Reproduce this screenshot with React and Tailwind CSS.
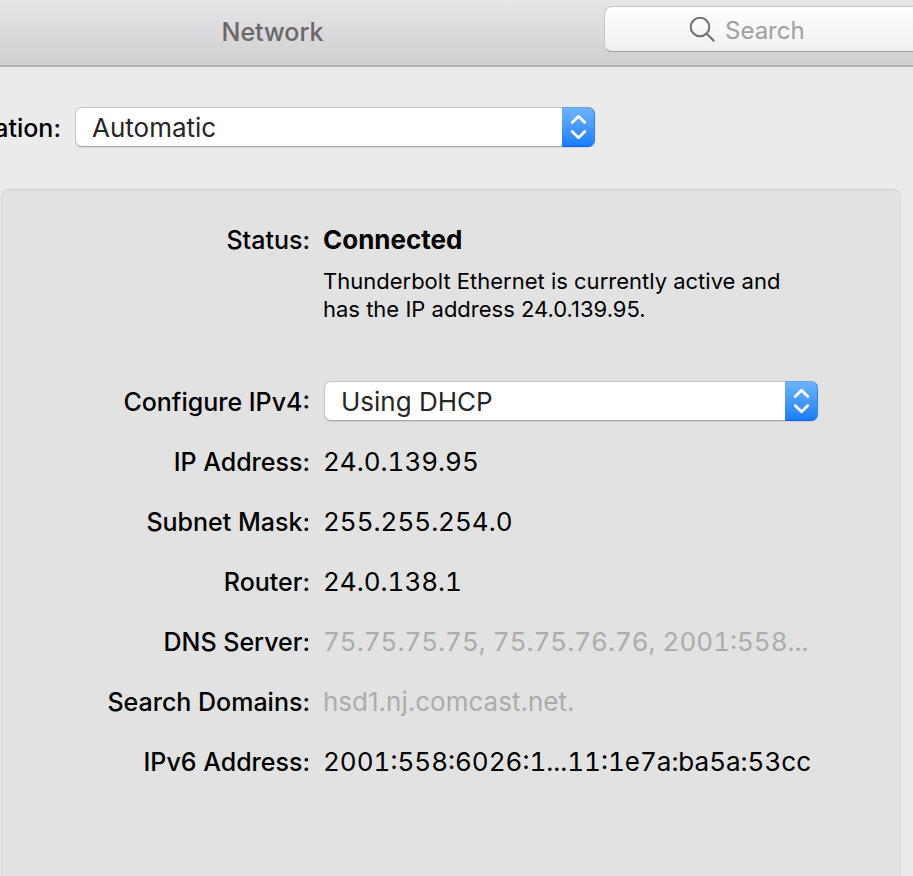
const StepperArrows = () => (
    <span className="pointer-events-none absolute inset-y-0 right-0 w-[33px] rounded-r-[7px] border-y border-r border-t-[#5ea5ee] border-r-[#2f83f5] border-b-[#0f62f8] bg-gradient-to-b from-[#6cb3fa] to-[#157dfd]">
        <svg width="32" height="38" viewBox="0 0 32 38" fill="none" stroke="white" strokeWidth="2.8" strokeLinecap="round" strokeLinejoin="round" aria-hidden="true">
            <path d="M10.2 14.6 16.5 8.3 22.8 14.6" />
            <path d="M10.2 23.4 16.5 29.7 22.8 23.4" />
        </svg>
    </span>
);

const PopUp = ({ id, options }) => (
    <div className="relative min-w-0 flex-1">
        <select
            id={id}
            className="block h-10 w-full appearance-none rounded-[7px] border border-[#c3c3c3] border-b-[#a8a8a8] bg-white pt-[2px] pr-10 pl-4 text-[26px] leading-8 text-[#262626] shadow-[0_1px_1px_rgba(0,0,0,0.08)]"
        >
            {options.map((option) => (
                <option key={option}>{option}</option>
            ))}
        </select>
        <StepperArrows />
    </div>
);

const details = [
    { label: "IP Address:", value: "24.0.139.95", style: "tabular-nums" },
    { label: "Subnet Mask:", value: "255.255.254.0", style: "tabular-nums" },
    { label: "Router:", value: "24.0.138.1", style: "tabular-nums" },
    { label: "DNS Server:", value: "75.75.75.75, 75.75.76.76, 2001:558...", style: "text-[#acacac] tabular-nums" },
    { label: "Search Domains:", value: "hsd1.nj.comcast.net.", style: "text-[#acacac]" },
    { label: "IPv6 Address:", value: "2001:558:6026:1...11:1e7a:ba5a:53cc", style: "tabular-nums" },
];

const App = () => {
    return (
        <div className="flex min-h-screen flex-col overflow-hidden bg-[#ebebeb] font-[Inter,'Liberation_Sans',sans-serif] text-[26px] leading-8 text-black">
            <header className="flex border-b-2 border-[#b2b0b2] bg-gradient-to-b from-[#e7e5e7] to-[#d0ced0] pt-[6px] pb-[13px]">
                <h1 className="w-[545px] pt-[10px] text-center text-[25px] leading-8 font-medium text-[#686868]">Network</h1>
                <label className="ml-[59px] flex h-[46px] min-w-0 flex-1 items-center gap-2 rounded-l-[8px] border border-r-0 border-[#c6c4c6] border-b-[#a09ea0] bg-gradient-to-b from-white to-[#f0f0f0] pl-[84px]">
                    <svg width="28" height="28" viewBox="0 0 28 28" fill="none" stroke="#6f6f6f" strokeWidth="2" className="shrink-0" aria-hidden="true">
                        <circle cx="11" cy="12" r="9.3" />
                        <path d="M17.5 18.5 25.3 26.3" />
                    </svg>
                    <input
                        type="search"
                        placeholder="Search"
                        aria-label="Search"
                        className="w-full min-w-0 bg-transparent pt-1 text-[24px] outline-none placeholder:text-[#a0a0a0]"
                    />
                </label>
            </header>

            <div className="mt-10 flex items-center gap-[14px]">
                <label htmlFor="location" className="flex w-[61px] justify-end pt-[2px] text-[25px] leading-8 font-medium">
                    Location:
                </label>
                <div className="flex w-[520px]">
                    <PopUp id="location" options={["Automatic"]} />
                </div>
            </div>

            <main className="mt-[42px] mr-3 ml-px flex-1 rounded-t-[8px] border border-b-0 border-[#d9d9d9] border-t-[#cfcfcf] bg-[#e2e2e2] pt-[34px] pr-[82px]">
                <dl className="grid grid-cols-[308px_1fr] gap-x-[13px]">
                    <dt className="text-right text-[25px] leading-8 font-medium">Status:</dt>
                    <dd>
                        <strong className="block font-bold">Connected</strong>
                        <p className="mt-[11px] max-w-[480px] text-[22px] leading-7">
                            Thunderbolt Ethernet is currently active and has the IP address 24.0.139.95.
                        </p>
                    </dd>
                </dl>

                <div className="mt-[58px] flex items-center gap-[14px]">
                    <label htmlFor="ipv4" className="w-[308px] pt-[2px] text-right text-[25px] leading-8 font-medium">
                        Configure IPv4:
                    </label>
                    <PopUp id="ipv4" options={["Using DHCP"]} />
                </div>

                <dl className="mt-[25px] grid grid-cols-[308px_1fr] gap-x-[13px] gap-y-7">
                    {details.map(({ label, value, style }) => (
                        <div key={label} className="contents">
                            <dt className="text-right text-[25px] leading-8 font-medium">{label}</dt>
                            <dd className={`whitespace-nowrap ${style}`}>{value}</dd>
                        </div>
                    ))}
                </dl>
            </main>
        </div>
    );
};

export default App;
